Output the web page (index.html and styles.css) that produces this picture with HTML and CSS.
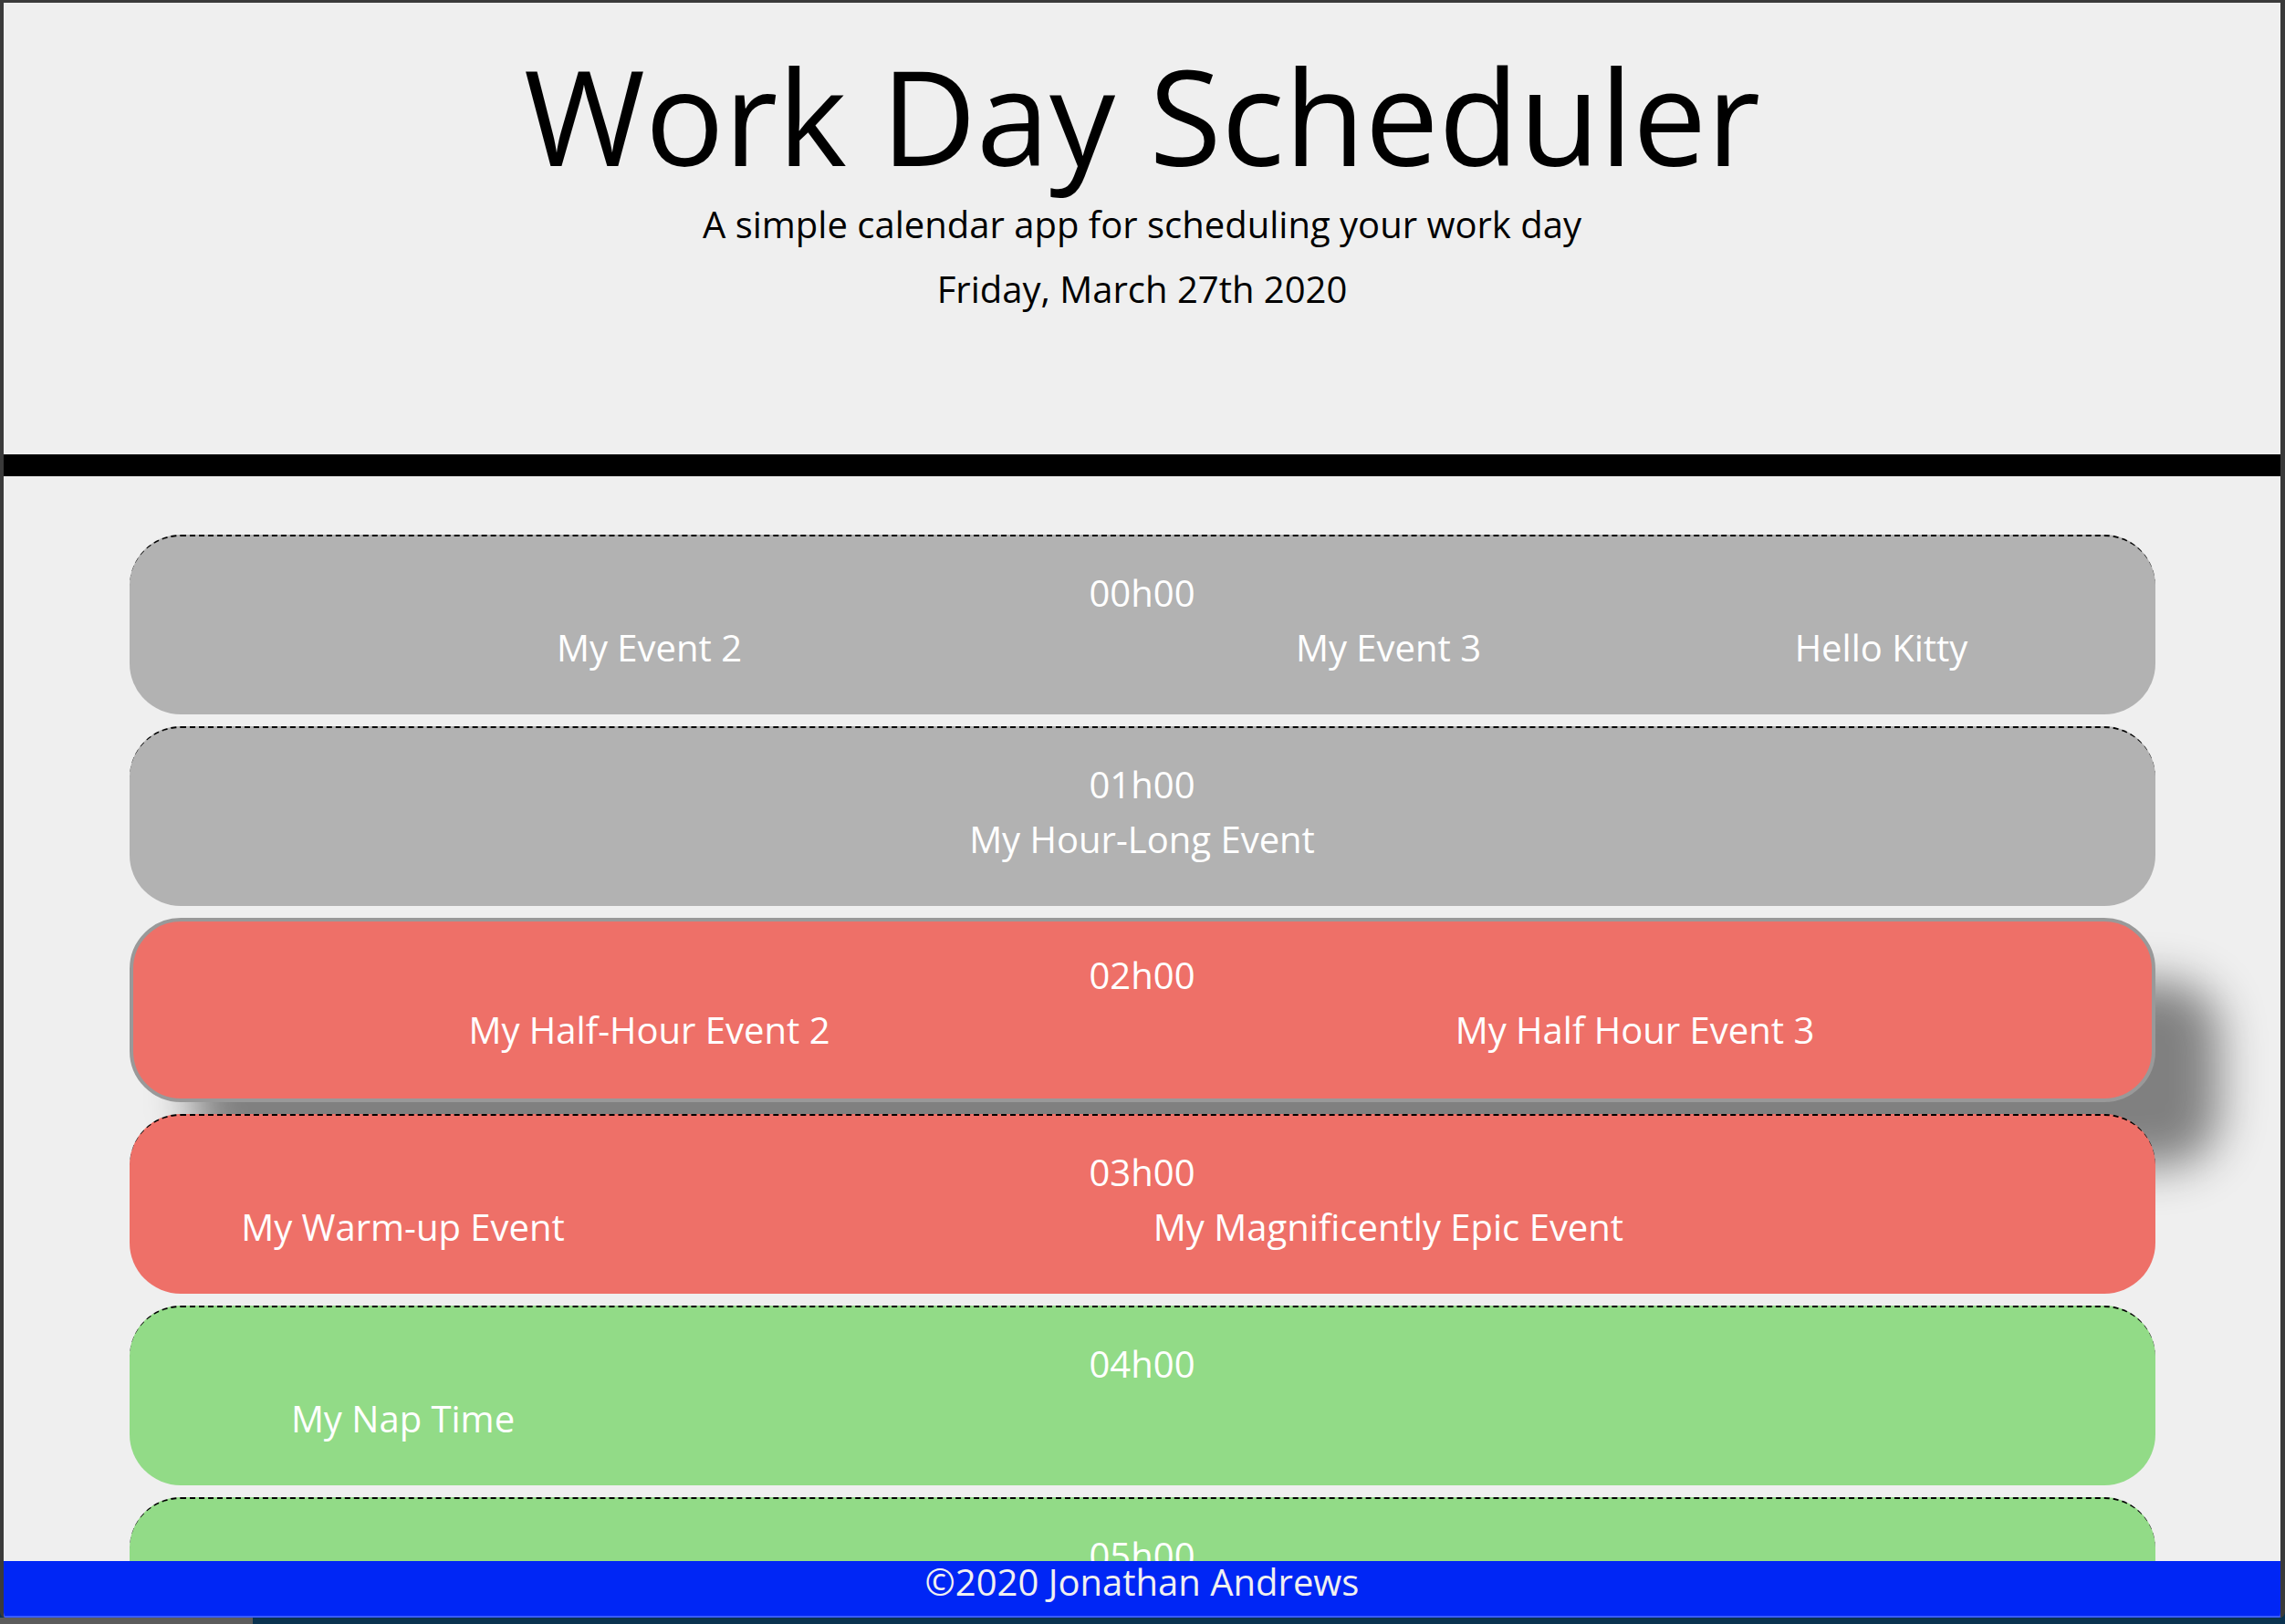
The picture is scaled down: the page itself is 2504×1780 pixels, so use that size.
FILE: index.html
```html
<!DOCTYPE html>
<html lang="en">
<head>
<meta charset="utf-8">
<title>Work Day Scheduler</title>
<link rel="stylesheet" href="styles.css">
</head>
<body>
<div class="window">
  <div class="page">
    <header class="jumbotron">
      <h1 class="title">Work Day Scheduler</h1>
      <p class="lead">A simple calendar app for scheduling your work day</p>
      <p class="date">Friday, March 27th 2020</p>
    </header>
    <main class="container">
      <section class="hour-block past">
        <div class="hour-label">00h00</div>
        <div class="events">
          <div class="event span-0-6">My Event 2</div>
          <div class="event span-6-9">My Event 3</div>
          <div class="event span-9-12">Hello Kitty</div>
        </div>
      </section>
      <section class="hour-block past">
        <div class="hour-label">01h00</div>
        <div class="events">
          <div class="event span-0-12">My Hour-Long Event</div>
        </div>
      </section>
      <section class="hour-block present">
        <div class="hour-label">02h00</div>
        <div class="events">
          <div class="event span-0-6">My Half-Hour Event 2</div>
          <div class="event span-6-12">My Half Hour Event 3</div>
        </div>
      </section>
      <section class="hour-block present-next">
        <div class="hour-label">03h00</div>
        <div class="events">
          <div class="event span-0-3">My Warm-up Event</div>
          <div class="event span-3-12">My Magnificently Epic Event</div>
        </div>
      </section>
      <section class="hour-block future">
        <div class="hour-label">04h00</div>
        <div class="events">
          <div class="event span-0-3">My Nap Time</div>
        </div>
      </section>
      <section class="hour-block future">
        <div class="hour-label">05h00</div>
        <div class="events">
          <div class="event span-0-12">&nbsp;</div>
        </div>
      </section>
    </main>
  </div>
  <footer class="footer">©2020 Jonathan Andrews</footer>
</div>
<div class="desktop">
  <div class="desk-left"></div>
  <div class="desk-right"></div>
</div>
</body>
</html>
```

FILE: styles.css
```css
html, body {
  margin: 0;
  padding: 0;
}

body {
  width: 2504px;
  height: 1780px;
  overflow: hidden;
  background: #0a3350;
  font-family: "Open Sans", "Noto Sans", sans-serif;
  display: flex;
  flex-direction: column;
}

.window {
  flex: none;
  height: 1773px;
  box-sizing: border-box;
  border-style: solid;
  border-color: #3a3a3a;
  border-width: 3px 5px 0 4px;
  border-radius: 0 0 6px 6px;
  background: #efefef;
  display: flex;
  flex-direction: column;
  overflow: hidden;
}

.page {
  flex: 1;
  min-height: 0;
  overflow: hidden;
}

.jumbotron {
  text-align: center;
  color: #000;
  padding: 37px 0 151px;
  border-bottom: 24px solid #000;
}

.title {
  margin: 0;
  font-size: 144px;
  line-height: 172.8px;
  font-weight: 400;
}

.lead {
  margin: 3px 0 0;
  font-size: 40px;
  line-height: 60px;
}

.date {
  margin: 11px 0 0;
  font-size: 40px;
  line-height: 60px;
}

.container {
  width: 2280px;
  box-sizing: border-box;
  margin: 64px auto 0;
  padding: 0 30px;
}

.hour-block {
  border-top: 2px dashed #000;
  border-radius: 56px;
  padding: 32px 30px 43px;
  margin-bottom: 13px;
  color: #fff;
  text-align: center;
  font-size: 40px;
  line-height: 60px;
}

.past {
  background: #b2b2b2;
}

.present {
  background: #ee7068;
  border: 4px solid #999;
  padding: 29px 26px 45px;
  box-shadow: 70px 70px 50px #808080;
}

.present-next {
  background: #ee7068;
}

.future {
  background: #92db87;
}

.hour-label {
  height: 60px;
}

.events {
  display: grid;
  grid-template-columns: repeat(12, 1fr);
}

.event {
  white-space: nowrap;
}

.span-0-3 { grid-column: 1 / 4; }
.span-0-6 { grid-column: 1 / 7; }
.span-0-12 { grid-column: 1 / 13; }
.span-3-12 { grid-column: 4 / 13; }
.span-6-9 { grid-column: 7 / 10; }
.span-6-12 { grid-column: 7 / 13; }
.span-9-12 { grid-column: 10 / 13; }

.footer {
  flex: none;
  height: 60px;
  background: #0026f5;
  border-bottom: 2px solid #3a5cff;
  color: #f0f0f0;
  text-align: center;
  font-size: 40px;
  line-height: 46px;
}

.desktop {
  flex: 1;
  display: flex;
}

.desk-left {
  width: 277px;
  background: #5c5c5c;
}

.desk-right {
  flex: 1;
  background: #0a3350;
}
```
